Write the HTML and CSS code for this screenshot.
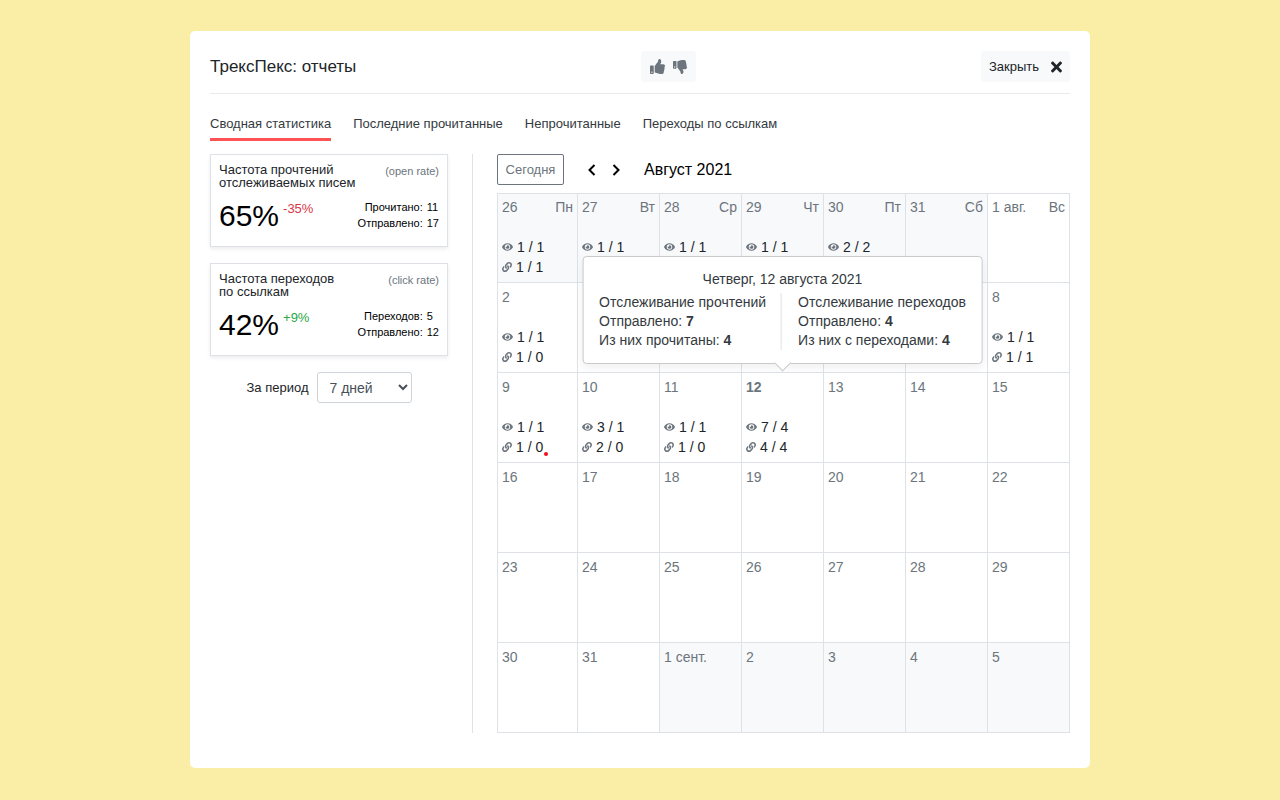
FILE: index.html
```
<!DOCTYPE html>
<html lang="ru">
<head>
<meta charset="utf-8">
<meta name="viewport" content="width=device-width, initial-scale=1">
<title>ТрексПекс: отчеты</title>
<link rel="stylesheet" href="styles.css">
</head>
<body>
<svg class="sprite" aria-hidden="true">
  <symbol id="eye" viewBox="0 0 576 512"><path d="M572.52 241.4C518.29 135.59 410.93 64 288 64S57.68 135.64 3.48 241.41a32.35 32.35 0 0 0 0 29.19C57.71 376.41 165.07 448 288 448s230.32-71.64 284.52-177.41a32.35 32.35 0 0 0 0-29.19zM288 400a144 144 0 1 1 144-144 143.93 143.93 0 0 1-144 144zm0-240a95.31 95.31 0 0 0-25.31 3.79 47.85 47.85 0 0 1-66.9 66.9A95.78 95.78 0 1 0 288 160z"/></symbol>
  <symbol id="link" viewBox="0 0 512 512"><path d="M326.612 185.391c59.747 59.809 58.927 155.698.36 214.59-.11.12-.24.25-.36.37l-67.2 67.2c-59.27 59.27-155.699 59.262-214.96 0-59.27-59.26-59.27-155.7 0-214.96l37.106-37.106c9.84-9.84 26.786-3.3 27.294 10.606.648 17.722 3.826 35.527 9.69 52.721 1.986 5.822.567 12.262-3.783 16.612l-13.087 13.087c-28.026 28.026-28.905 73.66-1.155 101.96 28.024 28.579 74.086 28.749 102.325.51l67.2-67.19c28.191-28.191 28.073-73.757 0-101.83-3.701-3.694-7.429-6.564-10.341-8.569a16.037 16.037 0 0 1-6.947-12.606c-.396-10.567 3.348-21.456 11.698-29.806l21.054-21.055c5.521-5.521 14.182-6.199 20.584-1.731a152.482 152.482 0 0 1 20.522 17.197zM467.547 44.449c-59.261-59.262-155.69-59.27-214.96 0l-67.2 67.2c-.12.12-.25.25-.36.37-58.566 58.892-59.387 154.781.36 214.59a152.454 152.454 0 0 0 20.521 17.196c6.402 4.468 15.064 3.789 20.584-1.731l21.054-21.055c8.35-8.35 12.094-19.239 11.698-29.806a16.037 16.037 0 0 0-6.947-12.606c-2.912-2.005-6.64-4.875-10.341-8.569-28.073-28.073-28.191-73.639 0-101.83l67.2-67.19c28.239-28.239 74.3-28.069 102.325.51 27.75 28.3 26.872 73.934-1.155 101.96l-13.087 13.087c-4.35 4.35-5.769 10.79-3.783 16.612 5.864 17.194 9.042 34.999 9.69 52.721.509 13.906 17.454 20.446 27.294 10.606l37.106-37.106c59.271-59.259 59.271-155.699.001-214.959z"/></symbol>
</svg>

<main class="panel">
  <header class="header">
    <h1 class="title">ТрексПекс: отчеты</h1>
    <div class="votes">
      <button class="vote" type="button" aria-label="Нравится"><svg class="vote-icon" viewBox="0 0 512 512" aria-hidden="true"><path d="M104 224H24c-13.255 0-24 10.745-24 24v240c0 13.255 10.745 24 24 24h80c13.255 0 24-10.745 24-24V248c0-13.255-10.745-24-24-24zM64 472c-13.255 0-24-10.745-24-24s10.745-24 24-24 24 10.745 24 24-10.745 24-24 24zM384 81.452c0 42.416-25.97 66.208-33.277 94.548h101.723c33.397 0 59.397 27.746 59.553 58.098.084 17.938-7.546 37.249-19.439 49.197l-.11.11c9.836 23.337 8.237 56.037-9.308 79.469 8.681 25.895-.069 57.704-16.382 74.757 4.298 17.598 2.244 32.575-6.148 44.632C440.202 511.587 389.616 512 346.839 512l-2.845-.001c-48.287-.017-87.806-17.598-119.56-31.725-15.957-7.099-36.821-15.887-52.651-16.178-6.54-.12-11.783-5.457-11.783-11.998v-213.77c0-3.2 1.282-6.271 3.558-8.521 39.614-39.144 56.648-80.587 89.117-113.111 14.804-14.832 20.188-37.236 25.393-58.902C282.515 39.293 291.817 0 312 0c24 0 72 8 72 81.452z"/></svg></button>
      <button class="vote" type="button" aria-label="Не нравится"><svg class="vote-icon vote-down" viewBox="0 0 512 512" aria-hidden="true"><path d="M0 56v240c0 13.255 10.745 24 24 24h80c13.255 0 24-10.745 24-24V56c0-13.255-10.745-24-24-24H24C10.745 32 0 42.745 0 56zm40 200c0-13.255 10.745-24 24-24s24 10.745 24 24-10.745 24-24 24-24-10.745-24-24zm272 256c-20.183 0-29.485-39.293-33.931-57.795-5.206-21.666-10.589-44.07-25.393-58.902-32.469-32.524-49.503-73.967-89.117-113.111a11.98 11.98 0 0 1-3.558-8.521V59.901c0-6.541 5.243-11.878 11.783-11.998 15.831-.29 36.694-9.079 52.651-16.178C256.189 17.598 295.709.017 343.995 0h2.844c42.777 0 93.363.413 113.774 29.737 8.392 12.057 10.446 27.034 6.148 44.632 16.312 17.053 25.063 48.863 16.382 74.757 17.544 23.432 19.143 56.132 9.308 79.469l.11.11c11.893 11.949 19.523 31.259 19.439 49.197-.156 30.352-26.157 58.098-59.553 58.098H350.723C358.03 364.34 384 388.132 384 430.548 384 504 336 512 312 512z"/></svg></button>
    </div>
    <button class="close" type="button">Закрыть
      <svg class="close-icon" viewBox="0 0 352 512" aria-hidden="true"><path d="M242.72 256l100.07-100.07c12.28-12.28 12.28-32.19 0-44.48l-22.24-22.24c-12.28-12.28-32.19-12.28-44.48 0L176 189.28 75.93 89.21c-12.28-12.28-32.19-12.28-44.48 0L9.21 111.45c-12.28 12.28-12.28 32.19 0 44.48L109.28 256 9.21 356.07c-12.28 12.28-12.28 32.19 0 44.48l22.24 22.24c12.28 12.28 32.2 12.28 44.48 0L176 322.72l100.07 100.07c12.28 12.28 32.2 12.28 44.48 0l22.24-22.24c12.28-12.28 12.28-32.19 0-44.48L242.72 256z"/></svg>
    </button>
  </header>

  <nav class="tabs">
    <a class="tab tab-active" href="#summary" aria-current="page">Сводная статистика</a>
    <a class="tab" href="#read">Последние прочитанные</a>
    <a class="tab" href="#unread">Непрочитанные</a>
    <a class="tab" href="#clicks">Переходы по ссылкам</a>
  </nav>

  <div class="content">
    <aside class="stats">
      <section class="card">
        <div class="card-row">
          <h2 class="card-title">Частота прочтений<br>отслеживаемых писем</h2>
          <span class="card-note">(open rate)</span>
        </div>
        <div class="card-row">
          <p class="rate"><span class="rate-value">65%</span><span class="rate-down">-35%</span></p>
          <dl class="counts"><dt>Прочитано:</dt><dd>11</dd><dt>Отправлено:</dt><dd>17</dd></dl>
        </div>
      </section>
      <section class="card">
        <div class="card-row">
          <h2 class="card-title">Частота переходов<br>по ссылкам</h2>
          <span class="card-note">(click rate)</span>
        </div>
        <div class="card-row">
          <p class="rate"><span class="rate-value">42%</span><span class="rate-up">+9%</span></p>
          <dl class="counts"><dt>Переходов:</dt><dd>5</dd><dt>Отправлено:</dt><dd>12</dd></dl>
        </div>
      </section>
      <div class="period">
        <label for="period">За период</label>
        <select id="period" class="period-select"><option>7 дней</option><option>30 дней</option></select>
      </div>
    </aside>

    <section class="calendar">
      <div class="toolbar">
        <button class="today" type="button">Сегодня</button>
        <div class="arrows">
          <button class="arrow" type="button" aria-label="Предыдущий месяц"><svg class="arrow-icon" viewBox="0 0 12 12" aria-hidden="true"><path d="M8.500 1L3.500 6L8.500 11"/></svg></button>
          <button class="arrow" type="button" aria-label="Следующий месяц"><svg class="arrow-icon" viewBox="0 0 12 12" aria-hidden="true"><path d="M3.500 1L8.500 6L3.500 11"/></svg></button>
        </div>
        <h2 class="month">Август 2021</h2>
      </div>
      <table class="grid">
        <tbody>
          <tr>
            <td class="day other"><div class="date"><span>26</span><span>Пн</span></div><div class="stat"><svg class="eye"><use href="#eye"/></svg>1 / 1</div><div class="stat"><svg class="link"><use href="#link"/></svg>1 / 1</div></td>
            <td class="day other"><div class="date"><span>27</span><span>Вт</span></div><div class="stat"><svg class="eye"><use href="#eye"/></svg>1 / 1</div></td>
            <td class="day other"><div class="date"><span>28</span><span>Ср</span></div><div class="stat"><svg class="eye"><use href="#eye"/></svg>1 / 1</div></td>
            <td class="day other"><div class="date"><span>29</span><span>Чт</span></div><div class="stat"><svg class="eye"><use href="#eye"/></svg>1 / 1</div></td>
            <td class="day other"><div class="date"><span>30</span><span>Пт</span></div><div class="stat"><svg class="eye"><use href="#eye"/></svg>2 / 2</div></td>
            <td class="day other"><div class="date"><span>31</span><span>Сб</span></div></td>
            <td class="day"><div class="date"><span>1 авг.</span><span>Вс</span></div></td>
          </tr>
          <tr>
            <td class="day"><div class="date">2</div><div class="stat"><svg class="eye"><use href="#eye"/></svg>1 / 1</div><div class="stat"><svg class="link"><use href="#link"/></svg>1 / 0</div></td>
            <td class="day"></td>
            <td class="day"></td>
            <td class="day"></td>
            <td class="day"></td>
            <td class="day"></td>
            <td class="day"><div class="date">8</div><div class="stat"><svg class="eye"><use href="#eye"/></svg>1 / 1</div><div class="stat"><svg class="link"><use href="#link"/></svg>1 / 1</div></td>
          </tr>
          <tr>
            <td class="day"><div class="date">9</div><div class="stat"><svg class="eye"><use href="#eye"/></svg>1 / 1</div><div class="stat"><svg class="link"><use href="#link"/></svg>1 / 0<span class="dot"></span></div></td>
            <td class="day"><div class="date">10</div><div class="stat"><svg class="eye"><use href="#eye"/></svg>3 / 1</div><div class="stat"><svg class="link"><use href="#link"/></svg>2 / 0</div></td>
            <td class="day"><div class="date">11</div><div class="stat"><svg class="eye"><use href="#eye"/></svg>1 / 1</div><div class="stat"><svg class="link"><use href="#link"/></svg>1 / 0</div></td>
            <td class="day current"><div class="date">12</div><div class="stat"><svg class="eye"><use href="#eye"/></svg>7 / 4</div><div class="stat"><svg class="link"><use href="#link"/></svg>4 / 4</div>
              <div class="tooltip" role="tooltip">
                <p class="tip-title">Четверг, 12 августа 2021</p>
                <div class="tip-cols">
                  <div class="tip-col">Отслеживание прочтений<br>Отправлено: <b>7</b><br>Из них прочитаны: <b>4</b></div>
                  <div class="tip-col">Отслеживание переходов<br>Отправлено: <b>4</b><br>Из них с переходами: <b>4</b></div>
                </div>
              </div>
            </td>
            <td class="day"><div class="date">13</div></td>
            <td class="day"><div class="date">14</div></td>
            <td class="day"><div class="date">15</div></td>
          </tr>
          <tr>
            <td class="day"><div class="date">16</div></td>
            <td class="day"><div class="date">17</div></td>
            <td class="day"><div class="date">18</div></td>
            <td class="day"><div class="date">19</div></td>
            <td class="day"><div class="date">20</div></td>
            <td class="day"><div class="date">21</div></td>
            <td class="day"><div class="date">22</div></td>
          </tr>
          <tr>
            <td class="day"><div class="date">23</div></td>
            <td class="day"><div class="date">24</div></td>
            <td class="day"><div class="date">25</div></td>
            <td class="day"><div class="date">26</div></td>
            <td class="day"><div class="date">27</div></td>
            <td class="day"><div class="date">28</div></td>
            <td class="day"><div class="date">29</div></td>
          </tr>
          <tr>
            <td class="day"><div class="date">30</div></td>
            <td class="day"><div class="date">31</div></td>
            <td class="day other"><div class="date">1 сент.</div></td>
            <td class="day other"><div class="date">2</div></td>
            <td class="day other"><div class="date">3</div></td>
            <td class="day other"><div class="date">4</div></td>
            <td class="day other"><div class="date">5</div></td>
          </tr>
        </tbody>
      </table>
    </section>
  </div>
</main>
</body>
</html>
```
FILE: styles.css
```
* {
  box-sizing: border-box;
}

body {
  margin: 0;
  padding: 31px 16px;
  background: #faeda5;
  color: #212529;
  font: 14px/20px "Liberation Sans", Arial, sans-serif;
}

h1, h2, p, dl, dd {
  margin: 0;
  font-weight: 400;
}

button, select {
  font: inherit;
  color: inherit;
}

.sprite {
  position: absolute;
  width: 0;
  height: 0;
}

.panel {
  max-width: 900px;
  margin: 0 auto;
  padding: 20px 20px 35px;
  background: #fff;
  border-radius: 5px;
}

.header {
  display: flex;
  align-items: center;
  justify-content: space-between;
  padding-bottom: 11px;
  border-bottom: 1px solid #ebebeb;
}

.title {
  font-size: 17px;
}

.votes {
  display: flex;
  height: 31px;
  padding: 0 5px;
  background: #f8f9fa;
  border-radius: 3px;
}

.vote {
  display: flex;
  align-items: center;
  padding: 0 4px;
  border: 0;
  background: none;
}

.vote-icon {
  width: 15px;
  height: 15px;
  fill: #6c757d;
}

.vote-down {
  width: 14px;
  height: 14px;
}

.close {
  display: flex;
  align-items: center;
  gap: 12px;
  height: 31px;
  padding: 0 8px;
  border: 0;
  border-radius: 3px;
  background: #f8f9fa;
  font-size: 13px;
}

.close-icon {
  width: 11px;
  height: 16px;
  fill: #212529;
}

.tabs {
  display: flex;
  gap: 22px;
  padding: 20px 0 13px;
}

.tab {
  padding-bottom: 4px;
  border-bottom: 3px solid transparent;
  color: #343a40;
  font-size: 13px;
  text-decoration: none;
}

.tab-active {
  border-bottom-color: #ff5252;
}

.content {
  display: flex;
}

.stats {
  display: flex;
  flex: 0 0 263px;
  flex-direction: column;
  gap: 16px;
  padding-right: 24px;
  border-right: 1px solid #dee2e6;
}

.card {
  height: 93px;
  padding: 8px;
  border: 1px solid #dee2e6;
  box-shadow: 0 2px 4px rgba(0, 0, 0, 0.08);
}

.card-row {
  display: flex;
  justify-content: space-between;
}

.card-title {
  font-size: 13px;
  line-height: 13px;
}

.card-note {
  color: #6c757d;
  font-size: 11px;
  line-height: 17px;
}

.rate {
  display: flex;
  gap: 4px;
  padding-top: 10px;
}

.rate-value {
  color: #000;
  font-size: 30px;
  line-height: 34px;
}

.rate-down {
  color: #dc3545;
  font-size: 13px;
}

.rate-up {
  color: #28a745;
  font-size: 13px;
}

.counts {
  display: grid;
  grid-template-columns: auto auto;
  column-gap: 4px;
  align-content: start;
  padding-top: 10px;
  color: #000;
  font-size: 11px;
  line-height: 16px;
}

.counts dt {
  text-align: right;
}

.period {
  display: flex;
  align-items: center;
  justify-content: center;
  gap: 8px;
  font-size: 13px;
}

.period-select {
  width: 95px;
  height: 31px;
  padding: 0 0 0 8px;
  border: 1px solid #ced4da;
  border-radius: 3px;
  background: #fff;
  color: #495057;
  font-size: 14px;
}

.calendar {
  flex: 1;
  min-width: 0;
  padding-left: 24px;
}

.toolbar {
  display: flex;
  align-items: center;
  height: 31px;
  margin-bottom: 8px;
}

.today {
  min-width: 67px;
  height: 31px;
  padding: 0 7px;
  border: 1px solid #6c757d;
  border-radius: 2px;
  background: #fff;
  color: #6c757d;
  font-size: 13px;
}

.arrows {
  display: flex;
  padding: 0 16px;
}

.arrow {
  display: flex;
  padding: 6px;
  border: 0;
  background: none;
}

.arrow-icon {
  width: 12px;
  height: 12px;
  fill: none;
  stroke: #000;
  stroke-width: 2;
}

.month {
  color: #000;
  font-size: 16px;
}

.grid {
  width: 100%;
  border-collapse: collapse;
  table-layout: fixed;
}

.day {
  position: relative;
  height: 90px;
  padding: 4px;
  border: 1px solid #dee2e6;
  vertical-align: top;
}

.day:first-child {
  width: 80px;
}

tr:first-child .day {
  height: 89px;
  padding-top: 3px;
}

.other {
  background: #f8f9fb;
}

.date {
  display: flex;
  justify-content: space-between;
  margin-bottom: 20px;
  color: #6c757d;
}

.current .date {
  font-weight: 700;
}

.stat {
  display: flex;
  align-items: center;
  gap: 4px;
}

.eye {
  width: 11px;
  height: 10px;
  fill: #6c757d;
}

.link {
  width: 10px;
  height: 10px;
  fill: #6c757d;
}

.dot {
  align-self: flex-end;
  width: 4px;
  height: 4px;
  margin: 0 0 1px -3px;
  border-radius: 50%;
  background: #f01020;
}

.tooltip {
  position: absolute;
  z-index: 1;
  bottom: calc(100% + 9px);
  left: 50%;
  width: max-content;
  padding: 13px 16px;
  border: 1px solid #c8cacc;
  border-radius: 4px;
  background: #fff;
  box-shadow: 0 4px 8px rgba(0, 0, 0, 0.06);
  color: #343a40;
  line-height: 19px;
  transform: translateX(-50%);
}

.tooltip::after {
  position: absolute;
  bottom: -6px;
  left: 50%;
  width: 11px;
  height: 11px;
  border: solid #c8cacc;
  border-width: 0 1px 1px 0;
  background: #fff;
  content: "";
  transform: translateX(-50%) rotate(45deg);
}

.tip-title {
  margin-bottom: 4px;
  text-align: center;
}

.tip-cols {
  display: flex;
}

.tip-col + .tip-col {
  margin-left: 15px;
  padding-left: 16px;
  border-left: 1px solid #dee2e6;
}
```
